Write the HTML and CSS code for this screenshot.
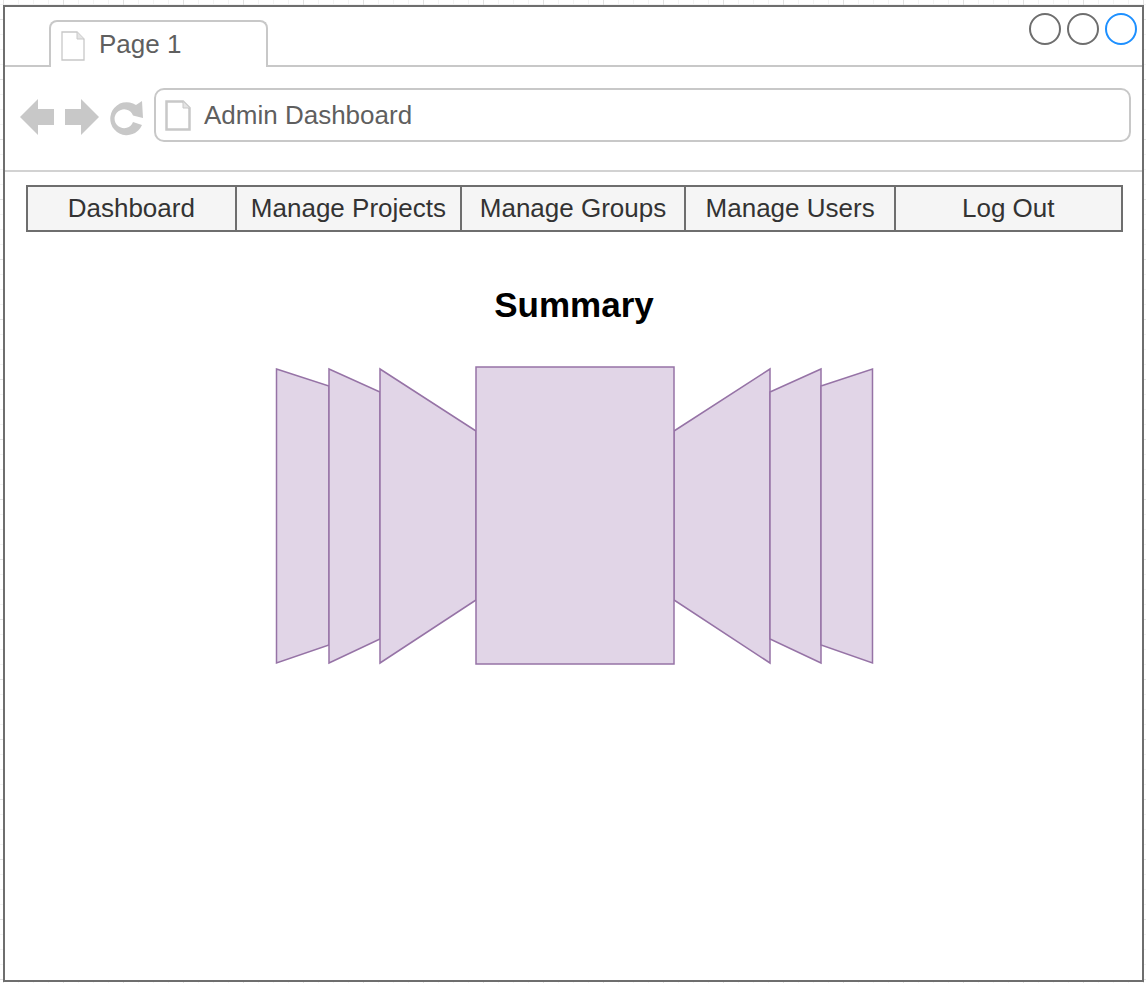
FILE: index.html
```html
<!DOCTYPE html>
<html lang="en">
<head>
<meta charset="utf-8">
<title>Admin Dashboard</title>
<link rel="stylesheet" href="styles.css">
</head>
<body>
<div class="window">
  <header class="tabbar">
    <div class="tab">
      <svg class="doc-tab" width="24" height="30" viewBox="0 0 24 30"><path d="M1 1H16L23 8V29H1Z" fill="#fff" stroke="#c8c8c8" stroke-width="1.3"/><path d="M16 1V8H23" fill="#e4e4e4" stroke="#c8c8c8" stroke-width="1"/></svg>
      <span>Page 1</span>
    </div>
    <div class="controls">
      <span class="dot"></span>
      <span class="dot"></span>
      <span class="dot dot-active"></span>
    </div>
  </header>
  <div class="addressbar">
    <svg class="nav-icons" width="124" height="38" viewBox="0 0 124 38">
      <path d="M0 19L18 1V11H34V27H18V37Z" fill="#c8c8c8"/>
      <path d="M79 19L61 1V11H45V27H61V37Z" fill="#c8c8c8"/>
      <path d="M122 3L123 20L113 17.500A9.500 9.500 0 1 0 113 24L122 27A16.500 16.500 0 1 1 116 7Z" fill="#c8c8c8"/>
    </svg>
    <div class="url">
      <svg class="doc-url" width="26" height="31" viewBox="0 0 26 31"><path d="M1.500 1.500H18L24.500 8V29.500H1.500Z" fill="#fff" stroke="#c8c8c8" stroke-width="2.500"/><path d="M18 1.500V8H24.500" fill="#e4e4e4" stroke="#c8c8c8" stroke-width="1"/></svg>
      <span>Admin Dashboard</span>
    </div>
  </div>
  <main class="content">
    <nav class="menu">
      <a class="item item-a">Dashboard</a>
      <a class="item item-b">Manage Projects</a>
      <a class="item item-b">Manage Groups</a>
      <a class="item item-a">Manage Users</a>
      <a class="item item-b">Log Out</a>
    </nav>
    <h1 class="title">Summary</h1>
    <svg class="coverflow" width="600" height="300" viewBox="0 0 600 300">
      <g fill="#e1d5e7" stroke="#9673a6" stroke-width="1.500">
        <polygon points="2.500,3 55,20 55,279 2.500,297"/>
        <polygon points="55,3 106,26 106,273 55,297"/>
        <polygon points="106,3 202,65 202,234 106,297"/>
        <polygon points="596,20 596,20 596,20"/>
        <polygon points="400,65 496,3 496,297 400,234"/>
        <polygon points="496,26 547,3 547,297 496,273"/>
        <polygon points="547,20 598.500,3 598.500,297 547,279"/>
        <rect x="202" y="1" width="198" height="297"/>
      </g>
    </svg>
  </main>
</div>
</body>
</html>
```
FILE: styles.css
```css
* { box-sizing: border-box; }
html, body { margin: 0; height: 983px; overflow: hidden; }
body {
  padding: 5px 2px 1px 3px;
  font-family: "Liberation Sans", Arial, sans-serif;
  background-color: #fff;
  background-image:
    linear-gradient(#e2e2e2 1px, transparent 1px),
    linear-gradient(90deg, #e2e2e2 1px, transparent 1px),
    linear-gradient(#f3f3f3 1px, transparent 1px),
    linear-gradient(90deg, #f3f3f3 1px, transparent 1px);
  background-size: 60px 60px, 60px 60px, 15px 15px, 15px 15px;
  background-position: 0 19px, 3px 0, 0 4px, 3px 0;
}
.window {
  height: 977px;
  border: 2px solid #6e6e6e;
  background: #fff;
  display: flex;
  flex-direction: column;
}
.tabbar {
  height: 60px;
  flex: none;
  display: flex;
  justify-content: space-between;
  align-items: flex-start;
  padding: 0 5px 0 44px;
  border-bottom: 2px solid #c8c8c8;
}
.tab {
  width: 219px;
  height: 47px;
  margin-top: 13px;
  display: flex;
  align-items: flex-start;
  gap: 14px;
  padding: 9px 0 0 10px;
  border: 2px solid #c8c8c8;
  border-bottom: none;
  border-radius: 8px 8px 0 0;
  background: #fff;
  color: #5f5f5f;
  font-size: 26px;
  line-height: 26px;
}
.tab span { margin-top: 0; }
.doc-tab { flex: none; }
.controls { display: flex; gap: 6px; margin-top: 6px; }
.dot {
  width: 32px;
  height: 32px;
  border: 2px solid #6e6e6e;
  border-radius: 50%;
}
.dot-active { border-color: #1e90ff; }
.addressbar {
  height: 105px;
  flex: none;
  display: flex;
  align-items: flex-start;
  padding: 21px 0 0 15px;
  border-bottom: 2px solid #d2d2d2;
}
.nav-icons { flex: none; margin-top: 10px; }
.url {
  width: 977px;
  height: 54px;
  margin-left: 10px;
  display: flex;
  align-items: center;
  gap: 13px;
  padding-left: 9px;
  border: 2px solid #c8c8c8;
  border-radius: 10px;
  color: #5f5f5f;
  font-size: 26px;
}
.doc-url { flex: none; }
.content {
  flex: 1;
  padding: 13px 20px 0 21px;
  display: flex;
  flex-direction: column;
  align-items: center;
}
.menu {
  width: 1097px;
  height: 47px;
  flex: none;
  display: flex;
  border: 2px solid #6e6e6e;
  background: #f5f5f5;
}
.item {
  display: flex;
  align-items: center;
  justify-content: center;
  color: #333;
  font-size: 26px;
  border-right: 2px solid #6e6e6e;
}
.item:last-child { border-right: none; }
.item-a { width: 210px; }
.item-b { width: 225px; }
.title {
  margin: 53px 0 0;
  font-size: 35px;
  line-height: 40px;
  font-weight: 700;
  color: #000;
}
.coverflow { margin-top: 41px; flex: none; }
```
